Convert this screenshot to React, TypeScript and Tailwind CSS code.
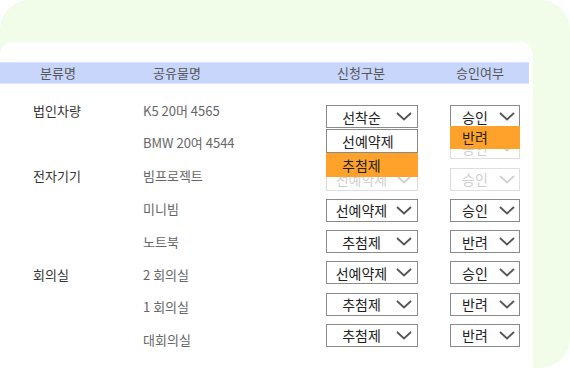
import { ReactNode } from "react";

type SelectProps = {
  value: string;
  width: "wide" | "narrow";
  disabled?: boolean;
  children?: ReactNode;
};

const Chevron = ({ disabled }: { disabled?: boolean }) => (
  <svg width="16" height="9" viewBox="0 0 16 9" className="shrink-0">
    <polyline
      points="1,1 8,7.5 15,1"
      fill="none"
      stroke={disabled ? "#d0d0d0" : "#555"}
      strokeWidth="1.8"
    />
  </svg>
);

const Select = ({ value, width, disabled, children }: SelectProps) => (
  <div
    className={`relative flex h-[23px] items-center bg-white border ${
      disabled ? "border-[#dedede]" : "border-[#8a8a8a]"
    } ${width === "wide" ? "w-[92px] pr-[5px]" : "w-[70px] pr-[4px]"}`}
  >
    <span
      className={`flex-1 text-center text-[14px] leading-none ${
        disabled ? "text-[#cfcfcf]" : "text-[#222]"
      }`}
    >
      {value}
    </span>
    <Chevron disabled={disabled} />
    {children}
  </div>
);

const leftRows: { group?: string; name: string }[] = [
  { group: "법인차량", name: "K5 20머 4565" },
  { name: "BMW 20여 4544" },
  { group: "전자기기", name: "빔프로젝트" },
  { name: "미니빔" },
  { name: "노트북" },
  { group: "회의실", name: "2 회의실" },
  { name: "1 회의실" },
  { name: "대회의실" },
];

const selectRows: { kind: string; approve: string; disabled?: boolean }[] = [
  { kind: "선착순", approve: "승인" },
  { kind: "선예약제", approve: "승인", disabled: true },
  { kind: "선예약제", approve: "승인", disabled: true },
  { kind: "선예약제", approve: "승인" },
  { kind: "추첨제", approve: "반려" },
  { kind: "선예약제", approve: "승인" },
  { kind: "추첨제", approve: "반려" },
  { kind: "추첨제", approve: "반려" },
];

export default function App() {
  return (
    <div className="w-[570px] h-[370px] overflow-hidden bg-white font-['Noto_Sans_CJK_KR','Noto_Sans',sans-serif]">
      <div className="w-[570px] h-[368px] rounded-[30px] bg-[#f2fde9] pt-[42px]">
        <div className="w-[533px] h-[330px] rounded-t-[13px] bg-white pt-[20px]">
          {/* Header */}
          <div className="flex h-[22px] w-[529px] items-center border-y border-[#dbe4fc] bg-[#c8d6fc] text-[13px] text-[#555]">
            <div className="w-[116px] text-center">분류명</div>
            <div className="w-[122px] text-center">공유물명</div>
            <div className="ml-[78px] w-[90px] text-center">신청구분</div>
            <div className="ml-[30px] w-[88px] text-center">승인여부</div>
          </div>

          {/* Body */}
          <div className="flex pt-[10px]">
            <div className="flex flex-col">
              {leftRows.map((row, i) => (
                <div key={i} className="flex h-[32.8px] items-center text-[13px]">
                  <div className="w-[143px] pl-[33px] text-[#333]">
                    {row.group}
                  </div>
                  <div className="w-[183px] text-[#666]">{row.name}</div>
                </div>
              ))}
            </div>

            <div className="flex flex-col gap-[8.25px] pt-[11px]">
              {selectRows.map((row, i) => (
                <div key={i} className="flex gap-[32px]">
                  <Select value={row.kind} width="wide" disabled={row.disabled}>
                    {i === 0 && (
                      <div className="absolute left-[-1px] top-[23px] z-10 w-[92px] text-[14px] text-[#222]">
                        <div className="flex h-[24px] items-center border border-[#8a8a8a] bg-white pl-[15px]">
                          선예약제
                        </div>
                        <div className="flex h-[24px] items-center bg-[#ffa22c] pl-[16px]">
                          추첨제
                        </div>
                      </div>
                    )}
                  </Select>
                  <Select value={row.approve} width="narrow" disabled={row.disabled}>
                    {i === 0 && (
                      <div className="absolute left-[-1px] top-[20px] z-10 flex h-[23px] w-[70px] items-center bg-[#ffa22c] pl-[12px] text-[14px] text-[#222]">
                        반려
                      </div>
                    )}
                  </Select>
                </div>
              ))}
            </div>
          </div>
        </div>
      </div>
    </div>
  );
}
